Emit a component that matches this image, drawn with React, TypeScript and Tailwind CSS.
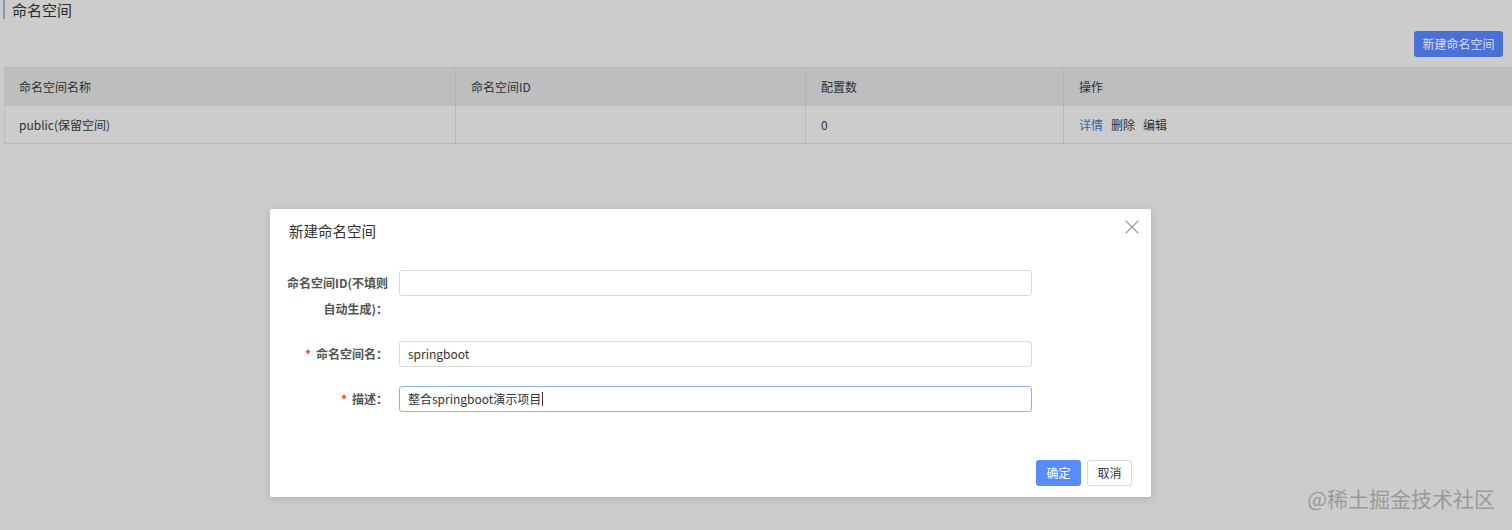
import React from 'react';
import { X } from 'lucide-react';

const font = { fontFamily: '"Noto Sans CJK SC", "Noto Sans", sans-serif' };

function FormRow({
  label,
  required,
  value,
  focused,
  className,
}: {
  label: React.ReactNode;
  required?: boolean;
  value?: string;
  focused?: boolean;
  className?: string;
}) {
  return (
    <div className={`flex items-start ${className ?? ''}`}>
      <div className="w-[129px] pr-[11px] text-right text-[12px] font-bold leading-[26px] text-[#555]">
        {required && <span className="mr-[5px] text-[#f04134]">*</span>}
        {label}
      </div>
      <div
        className={`flex h-[26px] w-[633px] items-center rounded-[3px] border bg-white px-[8px] text-[12px] text-[#333] ${
          focused ? 'border-[#8fb1f2]' : 'border-[#d9d9d9]'
        }`}
      >
        {value}
        {focused && <span className="ml-[1px] inline-block h-[14px] w-px bg-[#333]" />}
      </div>
    </div>
  );
}

export default function App() {
  return (
    <div className="relative h-[530px] overflow-hidden bg-[#cccccc]" style={font}>
      {/* page title */}
      <div className="ml-[3px] border-l-2 border-[#8797b3] pl-[7px] pt-[1px] text-[15px] leading-[18px] text-[#2b2b2b]">
        命名空间
      </div>

      <div className="flex justify-end pr-[9px] pt-[12px]">
        <button className="h-[26px] w-[89px] rounded-[3px] bg-[#4a72d6] text-[12px] text-[#d6def2]">
          新建命名空间
        </button>
      </div>

      {/* table */}
      <div className="ml-[4px] mt-[10px] border-l border-[#bcbcbc] text-[12px] text-[#2f2f2f]">
        <div className="flex h-[39px] items-center border-t border-[#b9b9b9] bg-[#bdbec0]">
          <div className="w-[450px] pl-[14px]">命名空间名称</div>
          <div className="flex h-full w-[350px] items-center border-l border-[#b3b3b3] pl-[15px]">命名空间ID</div>
          <div className="flex h-full w-[258px] items-center border-l border-[#b3b3b3] pl-[15px]">配置数</div>
          <div className="flex h-full flex-1 items-center border-l border-[#b3b3b3] pl-[15px]">操作</div>
        </div>
        <div className="flex h-[38px] items-center border-b border-[#b9b9b9]">
          <div className="w-[450px] pl-[14px]">public(保留空间)</div>
          <div className="h-full w-[350px] border-l border-[#b9b9b9]" />
          <div className="flex h-full w-[258px] items-center border-l border-[#b9b9b9] pl-[15px]">0</div>
          <div className="flex h-full flex-1 items-center gap-[8px] border-l border-[#b9b9b9] pl-[15px]">
            <span className="text-[#2a66ad]">详情</span>
            <span>删除</span>
            <span>编辑</span>
          </div>
        </div>
      </div>

      {/* modal */}
      <div className="absolute left-[270px] top-[209px] h-[288px] w-[881px] rounded-[2px] bg-white shadow-[0_2px_8px_rgba(0,0,0,0.15)]">
        <div className="flex items-start justify-between pl-[19px] pr-[7px] pt-[12px]">
          <div className="text-[14.5px] leading-[20px] text-[#333]">新建命名空间</div>
          <X className="-mt-[6px] h-[24px] w-[24px] text-[#9a9a9a]" strokeWidth={1.1} />
        </div>

        <div className="pt-[29px]">
          <FormRow
            label={
              <>
                命名空间ID(不填则
                <br />
                自动生成)：
              </>
            }
          />
          <FormRow className="mt-[19px]" label="命名空间名：" required value="springboot" />
          <FormRow className="mt-[19px]" label="描述：" required value="整合springboot演示项目" focused />
        </div>

        <div className="flex justify-end gap-[6px] pr-[19px] pt-[48px]">
          <button className="h-[26px] w-[45px] rounded-[3px] bg-[#5a8cf8] text-[12px] text-white">确定</button>
          <button className="h-[26px] w-[45px] rounded-[3px] border border-[#d9d9d9] bg-white text-[12px] text-[#333]">
            取消
          </button>
        </div>
      </div>

      {/* watermark */}
      <div className="absolute bottom-[20px] right-[17px] text-[21px] leading-[24px] text-[#9a9a9a]">
        @稀土掘金技术社区
      </div>
    </div>
  );
}
